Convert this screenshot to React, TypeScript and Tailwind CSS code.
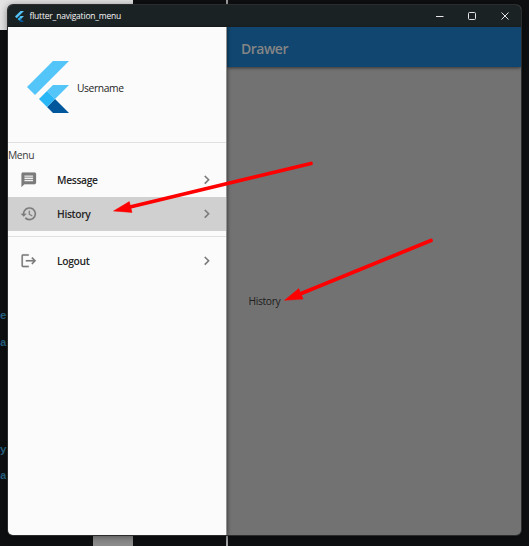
import type { ReactNode } from "react";

function FlutterLogo({ className }: { className: string }) {
  return (
    <svg viewBox="9.8 10.4 146.4 181.2" preserveAspectRatio="none" className={className}>
      <path fill="#54c5f8" d="M37.7 128.9 9.8 101 100.4 10.4H156.2zM156.2 94H100.4L79.5 114.9l27.9 27.9z" />
      <path fill="#01579b" d="M79.5 170.7l20.9 20.9h55.8l-48.8-48.8z" />
      <path fill="#29b6f6" d="M51.6 142.8l27.9-27.9 27.9 27.9-27.9 27.9z" />
    </svg>
  );
}

const icons = {
  message: "M20 2H4c-1.1 0-1.99.9-1.99 2L2 22l4-4h14c1.1 0 2-.9 2-2V4c0-1.1-.9-2-2-2zm-2 12H6v-2h12v2zm0-3H6V9h12v2zm0-3H6V6h12v2z",
  history: "M13 3c-4.97 0-9 4.03-9 9H1l3.89 3.89.07.14L9 12H6c0-3.87 3.13-7 7-7s7 3.13 7 7-3.13 7-7 7c-1.93 0-3.68-.79-4.94-2.06l-1.42 1.42C8.27 19.99 10.51 21 13 21c4.97 0 9-4.03 9-9s-4.03-9-9-9zm-1 5v5l4.28 2.54.72-1.21-3.5-2.08V8H12z",
  logout: "M17 7l-1.41 1.41L18.17 11H8v2h10.17l-2.58 2.58L17 17l5-5zM4 5h8V3H4c-1.1 0-2 .9-2 2v14c0 1.1.9 2 2 2h8v-2H4V5z",
  chevron: "M10 6 8.59 7.41 13.17 12l-4.58 4.59L10 18l6-6z",
};

function Icon({ name }: { name: keyof typeof icons }) {
  return (
    <svg viewBox="0 0 24 24" className="size-[17.5px] shrink-0 fill-[#7b7b7b] stroke-[#7b7b7b] stroke-[0.2]">
      <path d={icons[name]} />
    </svg>
  );
}

function MenuItem({ icon, selected, children }: { icon: keyof typeof icons; selected?: boolean; children: ReactNode }) {
  return (
    <li className={`flex h-[34.5px] items-center pr-[11px] pl-[11.5px] ${selected ? "bg-[#d0d0d0]" : ""}`}>
      <Icon name={icon} />
      <span className="ml-5 flex-1 pt-px text-[10.3px] leading-4 font-semibold tracking-[-0.35px]">{children}</span>
      <Icon name="chevron" />
    </li>
  );
}

function Desktop() {
  return (
    <div className="absolute inset-0 flex flex-col justify-between bg-[#0e0f10]">
      <div className="h-[30px] w-[133px] bg-[#e4e4e4]" />
      <div className="ml-[93px] h-[14px] w-10 bg-[#8c8c8c]" />
      <div className="absolute inset-y-0 left-[225.5px] w-[2px] bg-[#a5a5a5]" />
      <div className="absolute top-[309px] left-0 flex flex-col font-['Liberation_Mono',monospace] text-[11px] leading-[14px] font-bold text-[#286380]">
        <span>e</span>
        <span className="mt-[13px]">a</span>
        <span className="mt-[93px]">y</span>
        <span className="mt-[12px]">a</span>
      </div>
    </div>
  );
}

function Arrows() {
  return (
    <svg viewBox="0 0 529 546" className="pointer-events-none absolute inset-0 z-20 size-full fill-[#ff0000] stroke-[#ff0000]">
      <path d="M311 163.5 130 207M431 240.5 300 294" strokeWidth="3.7" strokeLinecap="round" />
      <path strokeWidth="0.5" d="M113.5 211 129.3 201.6 132 212.4zM284.5 300.3 298.8 288.6 303 299z" />
    </svg>
  );
}

export default function App() {
  return (
    <div className="relative h-[546px] w-[529px] overflow-hidden font-['Open_Sans',sans-serif] text-[#252525]">
      <Desktop />
      <div className="absolute top-[5px] left-2 flex h-[530px] w-[513px] flex-col overflow-hidden rounded-[5px] bg-[#727272] shadow-[0_0_0_1px_#2a2c2d,0_1px_8px_#0008]">
        <header className="flex h-[22px] shrink-0 items-center bg-[#1b2224] pl-[7px] text-[#f5f5f5]">
          <FlutterLogo className="h-[11px] w-[9px]" />
          <span className="ml-[5.5px] text-[8.5px] leading-3 font-medium tracking-[-0.2px]">flutter_navigation_menu</span>
          <svg viewBox="0 0 76 10" className="mr-[9.5px] ml-auto h-[10px] w-[76px] fill-none stroke-[#e5e5e5]">
            <path d="M0 5.5h7.5M65.5 1.5l7 7m0-7-7 7" />
            <rect x="32.5" y="1.5" width="7" height="7" rx="1" />
          </svg>
        </header>
        <div className="flex min-h-0 flex-1">
          <aside className="z-10 w-[219px] shrink-0 border-r border-[#929292] bg-[#fbfbfb] shadow-[1px_0_3px_#0006]">
            <div className="flex h-[116px] items-center border-b border-[#dfdfdf] pl-[19px]">
              <FlutterLogo className="mt-[5px] h-[52px] w-[42px]" />
              <span className="mt-[6px] ml-2 text-[10.3px] leading-4 font-medium tracking-[-0.4px]">Username</span>
            </div>
            <nav>
              <h2 className="pt-[5px] text-[10.3px] leading-[14px] tracking-[-0.4px] text-[#3c3c3c]">Menu</h2>
              <ul>
                <MenuItem icon="message">Message</MenuItem>
                <MenuItem icon="history" selected>History</MenuItem>
                <li className="mt-[5px] mb-[6px] h-px bg-[#dfdfdf]" />
                <MenuItem icon="logout">Logout</MenuItem>
              </ul>
            </nav>
          </aside>
          <main className="flex min-w-0 flex-1 flex-col">
            <div className="flex h-10 items-center bg-[#10466f] pt-[3px] pl-[14px] text-[14px] font-semibold tracking-[-0.5px] text-[#858585] shadow-[0_1px_3px_#0008]">Drawer</div>
            <p className="mt-[226px] ml-[21.5px] text-[10.3px] leading-4 tracking-[-0.35px] text-[#202020]">History</p>
          </main>
        </div>
      </div>
      <Arrows />
    </div>
  );
}
